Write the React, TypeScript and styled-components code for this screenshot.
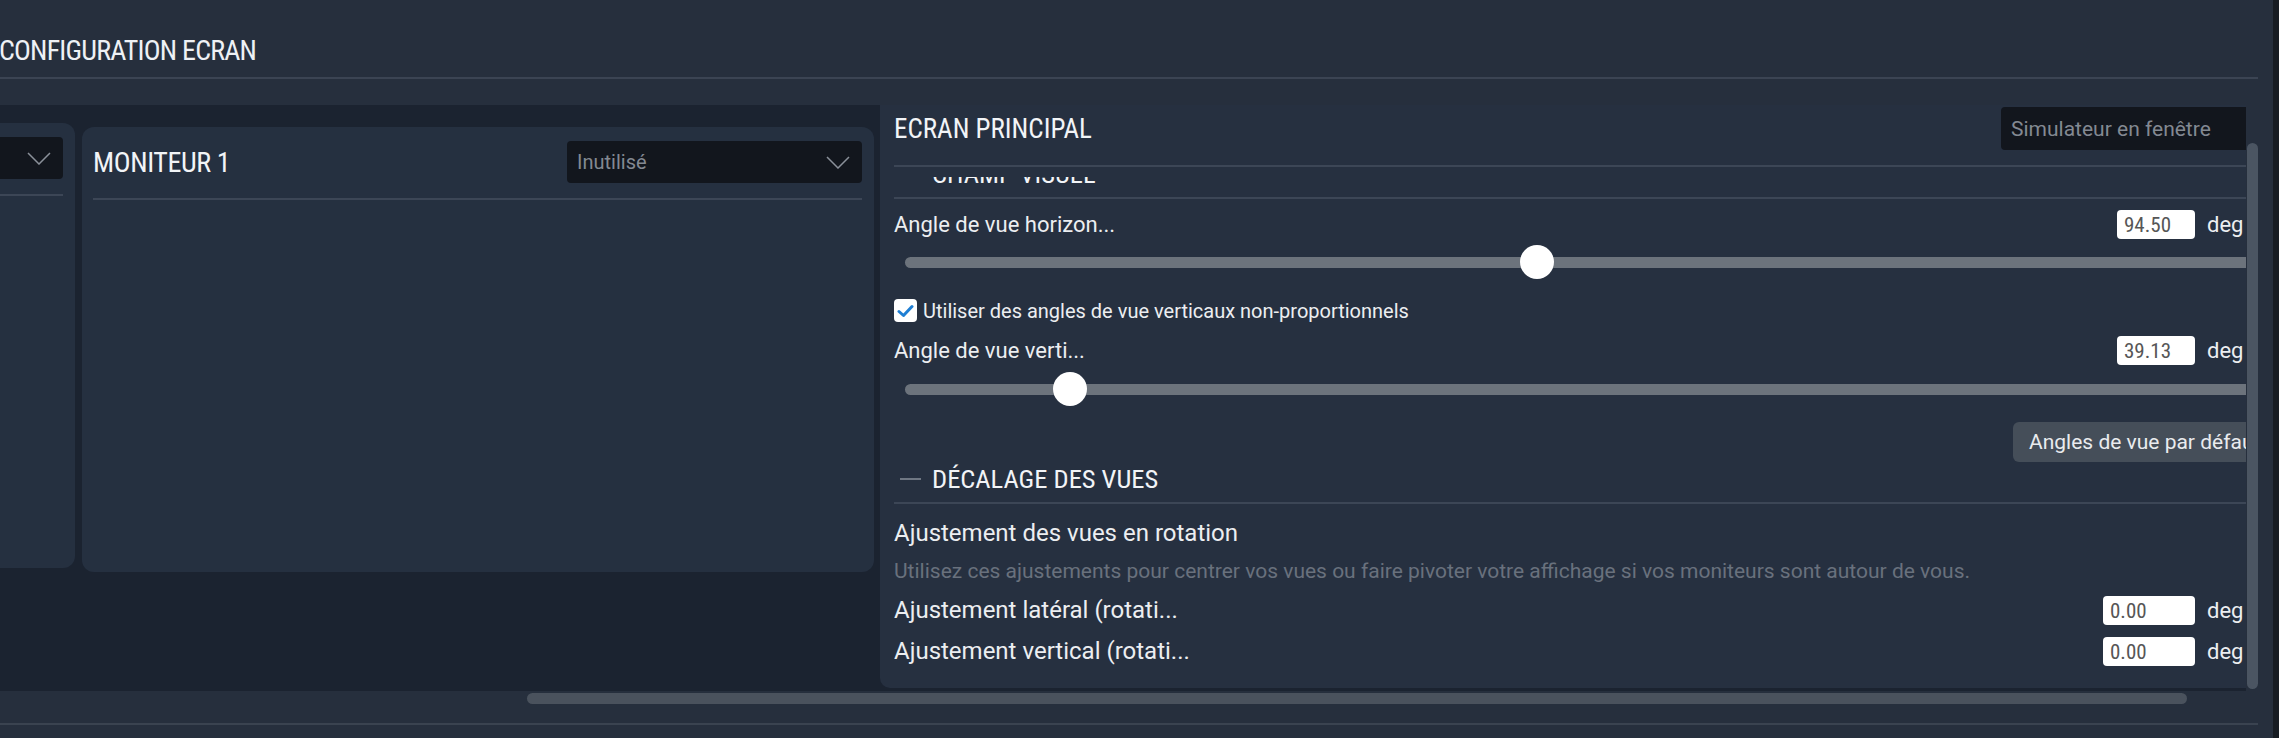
import React from "react";
import styled, { createGlobalStyle } from "styled-components";

const COND = `"Roboto Condensed", "Roboto", "Liberation Sans Narrow", sans-serif`;
const BODY = `"Roboto", "Noto Sans", sans-serif`;

const Global = createGlobalStyle`
  html, body { margin: 0; padding: 0; background: #262f3d; }
  body { width: 2279px; height: 738px; overflow: hidden; font-family: ${BODY}; }
  * { box-sizing: border-box; }
`;

const Page = styled.div`
  width: 2279px;
  height: 738px;
  display: flex;
  overflow: hidden;
  background: #262f3d;
`;

const Frame = styled.div`
  width: 2258px;
  flex-shrink: 0;
  display: flex;
  flex-direction: column;
`;

const EdgeStrip = styled.div`
  width: 6px;
  margin-left: auto;
  background: #171c23;
`;

const TitleBar = styled.div`
  height: 79px;
  padding-top: 34px;
  border-bottom: 2px solid #3b4453;
`;

const PageTitle = styled.h1`
  margin: 0 0 0 -1px;
  font-family: ${COND};
  font-stretch: condensed;
  font-weight: 400;
  font-size: 28px;
  line-height: 33px;
  letter-spacing: -0.8px;
  color: #eef1f5;
  white-space: nowrap;
`;

const MainWrap = styled.div`
  position: relative;
  margin-top: 26px;
  width: 2258px;
`;

const Main = styled.div`
  width: 2246px;
  height: 586px;
  display: flex;
  align-items: flex-start;
  background: #1b2330;
  overflow: hidden;
`;

const CardsArea = styled.div`
  width: 880px;
  height: 100%;
  flex-shrink: 0;
  display: flex;
  justify-content: flex-end;
  align-items: flex-start;
  gap: 7px;
  padding: 18px 6px 0 0;
  overflow: hidden;
`;

const Card = styled.div<{ $offset: number }>`
  width: 792px;
  height: 445px;
  flex-shrink: 0;
  margin-top: ${(p) => p.$offset}px;
  background: #253040;
  border-radius: 12px;
  padding: 0 12px 0 11px;
`;

const CardHeader = styled.div`
  display: flex;
  align-items: center;
  justify-content: space-between;
  padding: 14px 0 15px;
  border-bottom: 2px solid #3c4656;
`;

const CardTitle = styled.div`
  font-family: ${COND};
  font-stretch: condensed;
  font-size: 28px;
  line-height: 33px;
  letter-spacing: -0.4px;
  color: #f2f4f7;
  white-space: nowrap;
`;

const SelectBox = styled.div<{ $width: number; $height: number; $size: number; $overhang: number }>`
  width: ${(p) => p.$width}px;
  height: ${(p) => p.$height}px;
  margin-right: ${(p) => -p.$overhang}px;
  flex-shrink: 0;
  display: flex;
  align-items: center;
  justify-content: space-between;
  padding: 0 12px 0 10px;
  background: #12161d;
  border-radius: 4px;
  color: #838992;
  font-family: ${BODY};
  font-size: ${(p) => p.$size}px;
  white-space: nowrap;
`;

const Chevron = () => (
  <svg width="24" height="13" viewBox="0 0 24 13" fill="none">
    <path d="M1 1 L12 12 L23 1" stroke="#8a9099" strokeWidth="1.5" />
  </svg>
);

const Select = ({
  value,
  width,
  height,
  size,
  overhang = 0,
}: {
  value: string;
  width: number;
  height: number;
  size: number;
  overhang?: number;
}) => (
  <SelectBox $width={width} $height={height} $size={size} $overhang={overhang}>
    <span>{value}</span>
    <Chevron />
  </SelectBox>
);

const Panel = styled.div`
  width: 1396px;
  height: 583px;
  flex-shrink: 0;
  display: flex;
  flex-direction: column;
  background: #263040;
  border-radius: 0 0 0 10px;
  padding-left: 14px;
`;

const PanelHeader = styled.div`
  display: flex;
  align-items: center;
  justify-content: space-between;
  padding: 2px 0 15px;
  border-bottom: 2px solid #3c4656;
  margin-bottom: 10px;
`;

const PanelTitle = styled.div`
  font-family: ${COND};
  font-stretch: condensed;
  font-size: 27px;
  line-height: 30px;
  color: #f2f4f7;
  white-space: nowrap;
`;

const ScrollBody = styled.div`
  flex: 1;
  overflow: hidden;
`;

const ScrollContent = styled.div<{ $scroll: number }>`
  margin-top: ${(p) => -p.$scroll}px;
  display: flex;
  flex-direction: column;
`;

const SectionHeader = styled.div<{ $top: number }>`
  display: flex;
  align-items: center;
  gap: 11px;
  margin-top: ${(p) => p.$top}px;
  padding: 0 0 9px 6px;
  border-bottom: 2px solid #3c4656;
  font-family: ${COND};
  font-stretch: condensed;
  font-size: 26.5px;
  line-height: 28px;
  color: #f2f4f7;
  white-space: nowrap;
`;

const Dash = styled.span`
  width: 21px;
  height: 2px;
  background: #6f7783;
`;

const Row = styled.div<{ $top: number }>`
  display: flex;
  align-items: center;
  height: 29px;
  margin-top: ${(p) => p.$top}px;
`;

const Label = styled.div<{ $size: number }>`
  flex: 1;
  font-size: ${(p) => p.$size}px;
  line-height: 29px;
  color: #eceef1;
  white-space: nowrap;
`;

const NumInput = styled.div<{ $width: number }>`
  width: ${(p) => p.$width}px;
  height: 29px;
  background: #ffffff;
  border-radius: 4px;
  padding: 2px 0 0 7px;
  font-family: ${COND};
  font-stretch: condensed;
  font-weight: 400;
  font-size: 21px;
  line-height: 27px;
  color: #565656;
`;

const Unit = styled.div`
  width: 69px;
  margin-left: 12px;
  font-size: 22px;
  line-height: 29px;
  color: #eceef1;
`;

const SliderWrap = styled.div<{ $top: number }>`
  height: 34px;
  margin-top: ${(p) => p.$top}px;
  display: flex;
  align-items: center;
  padding: 0 11px;
`;

const Track = styled.div`
  position: relative;
  flex: 1;
  height: 11px;
  border-radius: 6px;
  background: #6c737c;
`;

const Thumb = styled.div`
  position: absolute;
  top: 50%;
  width: 34px;
  height: 34px;
  margin: -17px 0 0 -17px;
  border-radius: 50%;
  background: #ffffff;
`;

const Slider = ({ pct, top }: { pct: number; top: number }) => (
  <SliderWrap $top={top}>
    <Track>
      <Thumb style={{ left: `${pct}%` }} />
    </Track>
  </SliderWrap>
);

const CheckRow = styled.div<{ $top: number }>`
  display: flex;
  align-items: center;
  gap: 6px;
  height: 23px;
  margin-top: ${(p) => p.$top}px;
  font-size: 20px;
  color: #eceef1;
  white-space: nowrap;
`;

const CheckBox = styled.div`
  width: 23px;
  height: 23px;
  border-radius: 4px;
  background: #ffffff;
  display: flex;
  align-items: center;
  justify-content: center;
`;

const ButtonRow = styled.div<{ $top: number }>`
  display: flex;
  justify-content: flex-end;
  margin-top: ${(p) => p.$top}px;
`;

const Button = styled.button`
  width: 263px;
  height: 40px;
  border: none;
  border-radius: 6px;
  background: #454e59;
  color: #e9ebee;
  font-family: ${BODY};
  font-size: 21px;
  text-align: left;
  padding: 0 0 0 16px;
  white-space: nowrap;
  overflow: hidden;
`;

const SubTitle = styled.div<{ $top: number }>`
  margin-top: ${(p) => p.$top}px;
  font-size: 24px;
  line-height: 26px;
  color: #eceef1;
  white-space: nowrap;
`;

const Desc = styled.div<{ $top: number }>`
  margin-top: ${(p) => p.$top}px;
  font-size: 21px;
  line-height: 22px;
  color: #69717d;
  white-space: nowrap;
`;

const VThumb = styled.div`
  position: absolute;
  left: 2247px;
  top: 38px;
  width: 11px;
  height: 546px;
  border-radius: 6px;
  background: #4b5562;
`;

const HScroll = styled.div`
  height: 32px;
  padding-top: 2px;
`;

const HThumb = styled.div`
  margin-left: 527px;
  width: 1660px;
  height: 11px;
  border-radius: 6px;
  background: #4a525d;
`;

const BottomLine = styled.div`
  border-top: 2px solid #3a4350;
`;

export default function App() {
  return (
    <>
      <Global />
      <Page>
        <Frame>
          <TitleBar>
            <PageTitle>CONFIGURATION ECRAN</PageTitle>
          </TitleBar>
          <MainWrap>
            <Main>
              <CardsArea>
                <Card $offset={0}>
                  <CardHeader>
                    <CardTitle>MONITEUR 2</CardTitle>
                    <Select value="Inutilisé" width={295} height={42} size={20} />
                  </CardHeader>
                </Card>
                <Card $offset={4}>
                  <CardHeader>
                    <CardTitle>MONITEUR 1</CardTitle>
                    <Select value="Inutilisé" width={295} height={42} size={20} />
                  </CardHeader>
                </Card>
              </CardsArea>
              <Panel>
                <PanelHeader>
                  <PanelTitle>ECRAN PRINCIPAL</PanelTitle>
                  <Select value="Simulateur en fenêtre" width={300} height={43} size={21} overhang={25} />
                </PanelHeader>
                <ScrollBody>
                  <ScrollContent $scroll={17}>
                    <SectionHeader $top={0}>
                      <Dash />
                      CHAMP VISUEL
                    </SectionHeader>
                    <Row $top={11}>
                      <Label $size={22}>Angle de vue horizon...</Label>
                      <NumInput $width={78}>94.50</NumInput>
                      <Unit>deg</Unit>
                    </Row>
                    <Slider pct={46.5} top={6} />
                    <CheckRow $top={20}>
                      <CheckBox>
                        <svg width="17" height="14" viewBox="0 0 17 14" fill="none">
                          <path d="M2 7.5 L6.5 11.5 L15 2.5" stroke="#1f7fd4" strokeWidth="3" strokeLinecap="round" strokeLinejoin="round" />
                        </svg>
                      </CheckBox>
                      Utiliser des angles de vue verticaux non-proportionnels
                    </CheckRow>
                    <Row $top={14}>
                      <Label $size={22}>Angle de vue verti...</Label>
                      <NumInput $width={78}>39.13</NumInput>
                      <Unit>deg</Unit>
                    </Row>
                    <Slider pct={12.1} top={7} />
                    <ButtonRow $top={16}>
                      <Button>Angles de vue par défaut</Button>
                    </ButtonRow>
                    <SectionHeader $top={3}>
                      <Dash />
                      DÉCALAGE DES VUES
                    </SectionHeader>
                    <SubTitle $top={16}>Ajustement des vues en rotation</SubTitle>
                    <Desc $top={14}>
                      Utilisez ces ajustements pour centrer vos vues ou faire pivoter votre affichage si vos moniteurs sont autour de vous.
                    </Desc>
                    <Row $top={14}>
                      <Label $size={24}>Ajustement latéral (rotati...</Label>
                      <NumInput $width={92}>0.00</NumInput>
                      <Unit>deg</Unit>
                    </Row>
                    <Row $top={12}>
                      <Label $size={24}>Ajustement vertical (rotati...</Label>
                      <NumInput $width={92}>0.00</NumInput>
                      <Unit>deg</Unit>
                    </Row>
                  </ScrollContent>
                </ScrollBody>
              </Panel>
            </Main>
            <VThumb />
          </MainWrap>
          <HScroll>
            <HThumb />
          </HScroll>
          <BottomLine />
        </Frame>
        <EdgeStrip />
      </Page>
    </>
  );
}
